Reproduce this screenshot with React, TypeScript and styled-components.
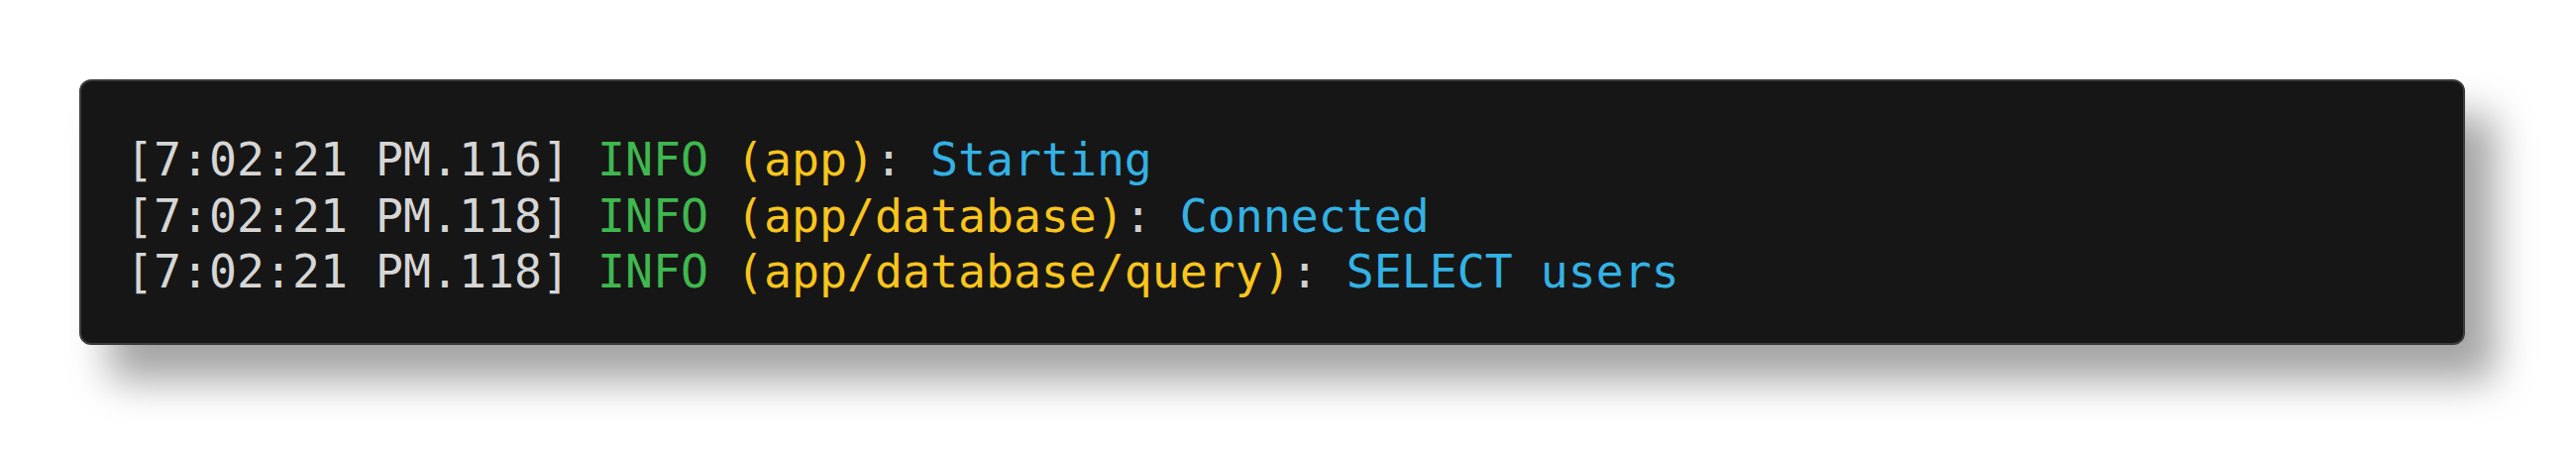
import React from "react";
import styled, { createGlobalStyle } from "styled-components";

const GlobalStyle = createGlobalStyle`
  html, body {
    margin: 0;
    padding: 0;
    background: #ffffff;
  }
`;

const Page = styled.div`
  box-sizing: border-box;
  min-height: 460px;
  padding: 80px 112px 112px 80px;
`;

const Terminal = styled.pre`
  margin: 0;
  box-sizing: border-box;
  height: 268px;
  padding: 51px 45px 0 45px;
  background: #161616;
  border: 2px solid #3c3c3c;
  border-radius: 12px;
  box-shadow: 30px 36px 40px rgba(0, 0, 0, 0.36);
  font-family: "DejaVu Sans Mono", "Liberation Mono", monospace;
  font-size: 46.5px;
  line-height: 56.7px;
  color: #d4d4d4;
  white-space: pre;
`;

const Line = styled.div`
  display: block;
`;

type Tone = "time" | "level" | "name" | "punct" | "msg";

const palette: Record<Tone, string> = {
  time: "#d6d6d6",
  level: "#3fb84f",
  name: "#f9c51d",
  punct: "#d0d0d0",
  msg: "#33b2e4",
};

const Seg = styled.span<{ $tone: Tone }>`
  color: ${(p) => palette[p.$tone]};
`;

const logs = [
  { time: "[7:02:21 PM.116]", name: "(app)", msg: "Starting" },
  { time: "[7:02:21 PM.118]", name: "(app/database)", msg: "Connected" },
  { time: "[7:02:21 PM.118]", name: "(app/database/query)", msg: "SELECT users" },
];

export default function App() {
  return (
    <>
      <GlobalStyle />
      <Page>
        <Terminal>
          {logs.map((l, i) => (
            <Line key={i}>
              <Seg $tone="time">{l.time}</Seg>{" "}
              <Seg $tone="level">INFO</Seg>{" "}
              <Seg $tone="name">{l.name}</Seg>
              <Seg $tone="punct">:</Seg>{" "}
              <Seg $tone="msg">{l.msg}</Seg>
            </Line>
          ))}
        </Terminal>
      </Page>
    </>
  );
}
